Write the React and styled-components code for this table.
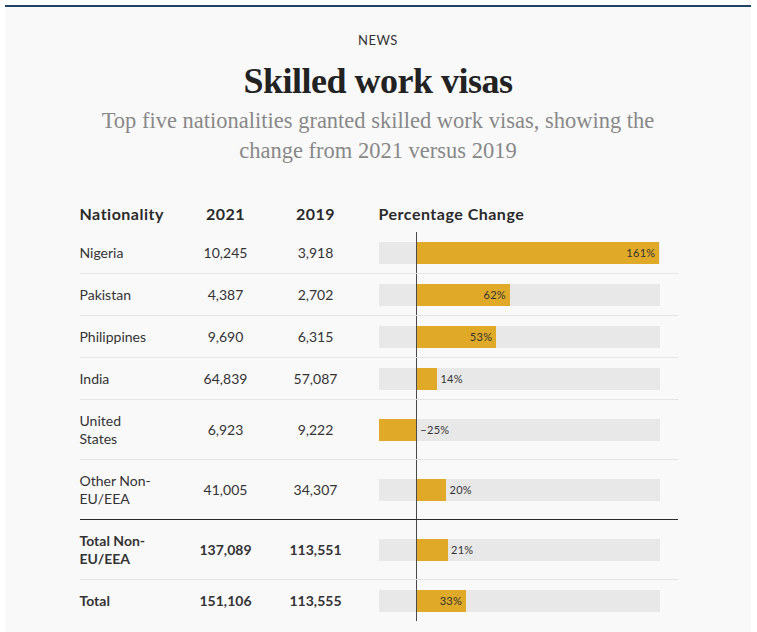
import styled, { createGlobalStyle } from "styled-components";

const GlobalStyle = createGlobalStyle`
  body {
    margin: 0;
    background: #ffffff;
    font-family: Lato, "Liberation Sans", sans-serif;
    color: #333333;
  }
`;

const MIN = -25;
const MAX = 161;
const TRACK = 281;
const scale = (v) => ((v - MIN) / (MAX - MIN)) * TRACK;
const ZERO = scale(0);

const rows = [
  { name: "Nigeria", y21: "10,245", y19: "3,918", pct: 161 },
  { name: "Pakistan", y21: "4,387", y19: "2,702", pct: 62 },
  { name: "Philippines", y21: "9,690", y19: "6,315", pct: 53 },
  { name: "India", y21: "64,839", y19: "57,087", pct: 14 },
  { name: "United States", y21: "6,923", y19: "9,222", pct: -25 },
  { name: "Other Non-EU/EEA", y21: "41,005", y19: "34,307", pct: 20 },
];

const totals = [
  { name: "Total Non-EU/EEA", y21: "137,089", y19: "113,551", pct: 21 },
  { name: "Total", y21: "151,106", y19: "113,555", pct: 33 },
];

const Card = styled.div`
  margin: 5px 6px 0 5px;
  min-height: 640px;
  background: #f9f9f9;
  border-top: 2px solid #1f4461;
  padding-top: 26px;
`;

const Kicker = styled.div`
  text-align: center;
  font-size: 13px;
  line-height: 14px;
  letter-spacing: 0.5px;
  color: #333333;
`;

const Title = styled.h1`
  margin: 14px 0 0;
  text-align: center;
  font-family: "Liberation Serif", serif;
  font-weight: 700;
  font-size: 36px;
  line-height: 40px;
  letter-spacing: -0.5px;
  color: #222222;
`;

const Subtitle = styled.p`
  margin: 5px auto 0;
  max-width: 590px;
  text-align: center;
  font-family: "Liberation Serif", serif;
  font-size: 22.5px;
  line-height: 30px;
  color: #888888;
`;

const Table = styled.div`
  width: 598px;
  margin: 27px auto 0;
  padding-left: 1px;
`;

const Row = styled.div`
  display: grid;
  grid-template-columns: 101px 90px 90px 1fr;
  border-top: 1px solid ${(p) => (p.$strong ? "#2b2b2b" : p.$first ? "transparent" : "#e5e5e5")};
  font-weight: ${(p) => (p.$bold ? 700 : 400)};
`;

const HeadRow = styled.div`
  display: grid;
  grid-template-columns: 101px 90px 90px 1fr;
  font-size: 16px;
  line-height: 18px;
  font-weight: 700;
  letter-spacing: 0.5px;
  color: #2a2a2a;
  padding: 12px 0 8px;
`;

const Head = styled.div`
  text-align: ${(p) => (p.$center ? "center" : "left")};
  padding-left: ${(p) => (p.$bar ? "18px" : "0")};
  white-space: nowrap;
`;

const Name = styled.div`
  align-self: center;
  padding: 11.5px 23px 11.5px 0;
  font-size: 14px;
  line-height: 18px;
`;

const Num = styled.div`
  align-self: center;
  text-align: center;
  font-size: 14px;
  line-height: 18px;
`;

const BarCell = styled.div`
  position: relative;
  display: flex;
  align-items: center;
  padding-left: 18px;
`;

const Axis = styled.div`
  position: absolute;
  top: 0;
  bottom: 0;
  left: ${18 + ZERO}px;
  width: 1px;
  background: #4a4a4a;
  z-index: 2;
`;

const Track = styled.div`
  position: relative;
  width: ${TRACK}px;
  height: 22px;
  background: #e8e8e8;
`;

const Fill = styled.div`
  position: absolute;
  top: 0;
  bottom: 0;
  background: #e0aa28;
`;

const Label = styled.span`
  position: absolute;
  top: 0;
  bottom: 0;
  display: flex;
  align-items: center;
  font-size: 11px;
  font-weight: 400;
  letter-spacing: 0.3px;
  color: #333333;
  white-space: nowrap;
  z-index: 3;
`;

function Bar({ pct }) {
  const x = scale(pct);
  const left = Math.min(x, ZERO);
  const width = Math.abs(x - ZERO);
  let labelStyle;
  if (pct < 0) {
    labelStyle = { left: ZERO + 4 };
  } else if (width >= 45) {
    labelStyle = { right: TRACK - x + 4 };
  } else {
    labelStyle = { left: x + 3 };
  }
  return (
    <BarCell>
      <Axis />
      <Track>
        <Fill style={{ left, width }} />
        <Label style={labelStyle}>{pct < 0 ? `\u2212${Math.abs(pct)}%` : `${pct}%`}</Label>
      </Track>
    </BarCell>
  );
}

function DataRow({ row, first, strong, bold }) {
  return (
    <Row $first={first} $strong={strong} $bold={bold}>
      <Name>{row.name}</Name>
      <Num>{row.y21}</Num>
      <Num>{row.y19}</Num>
      <Bar pct={row.pct} />
    </Row>
  );
}

export default function App() {
  return (
    <>
      <GlobalStyle />
      <Card>
        <Kicker>NEWS</Kicker>
        <Title>Skilled work visas</Title>
        <Subtitle>
          Top five nationalities granted skilled work visas, showing the change from 2021 versus 2019
        </Subtitle>
        <Table>
          <HeadRow>
            <Head>Nationality</Head>
            <Head $center>2021</Head>
            <Head $center>2019</Head>
            <Head $bar>Percentage Change</Head>
          </HeadRow>
          {rows.map((r, i) => (
            <DataRow key={r.name} row={r} first={i === 0} />
          ))}
          {totals.map((r, i) => (
            <DataRow key={r.name} row={r} strong={i === 0} bold />
          ))}
        </Table>
      </Card>
    </>
  );
}
